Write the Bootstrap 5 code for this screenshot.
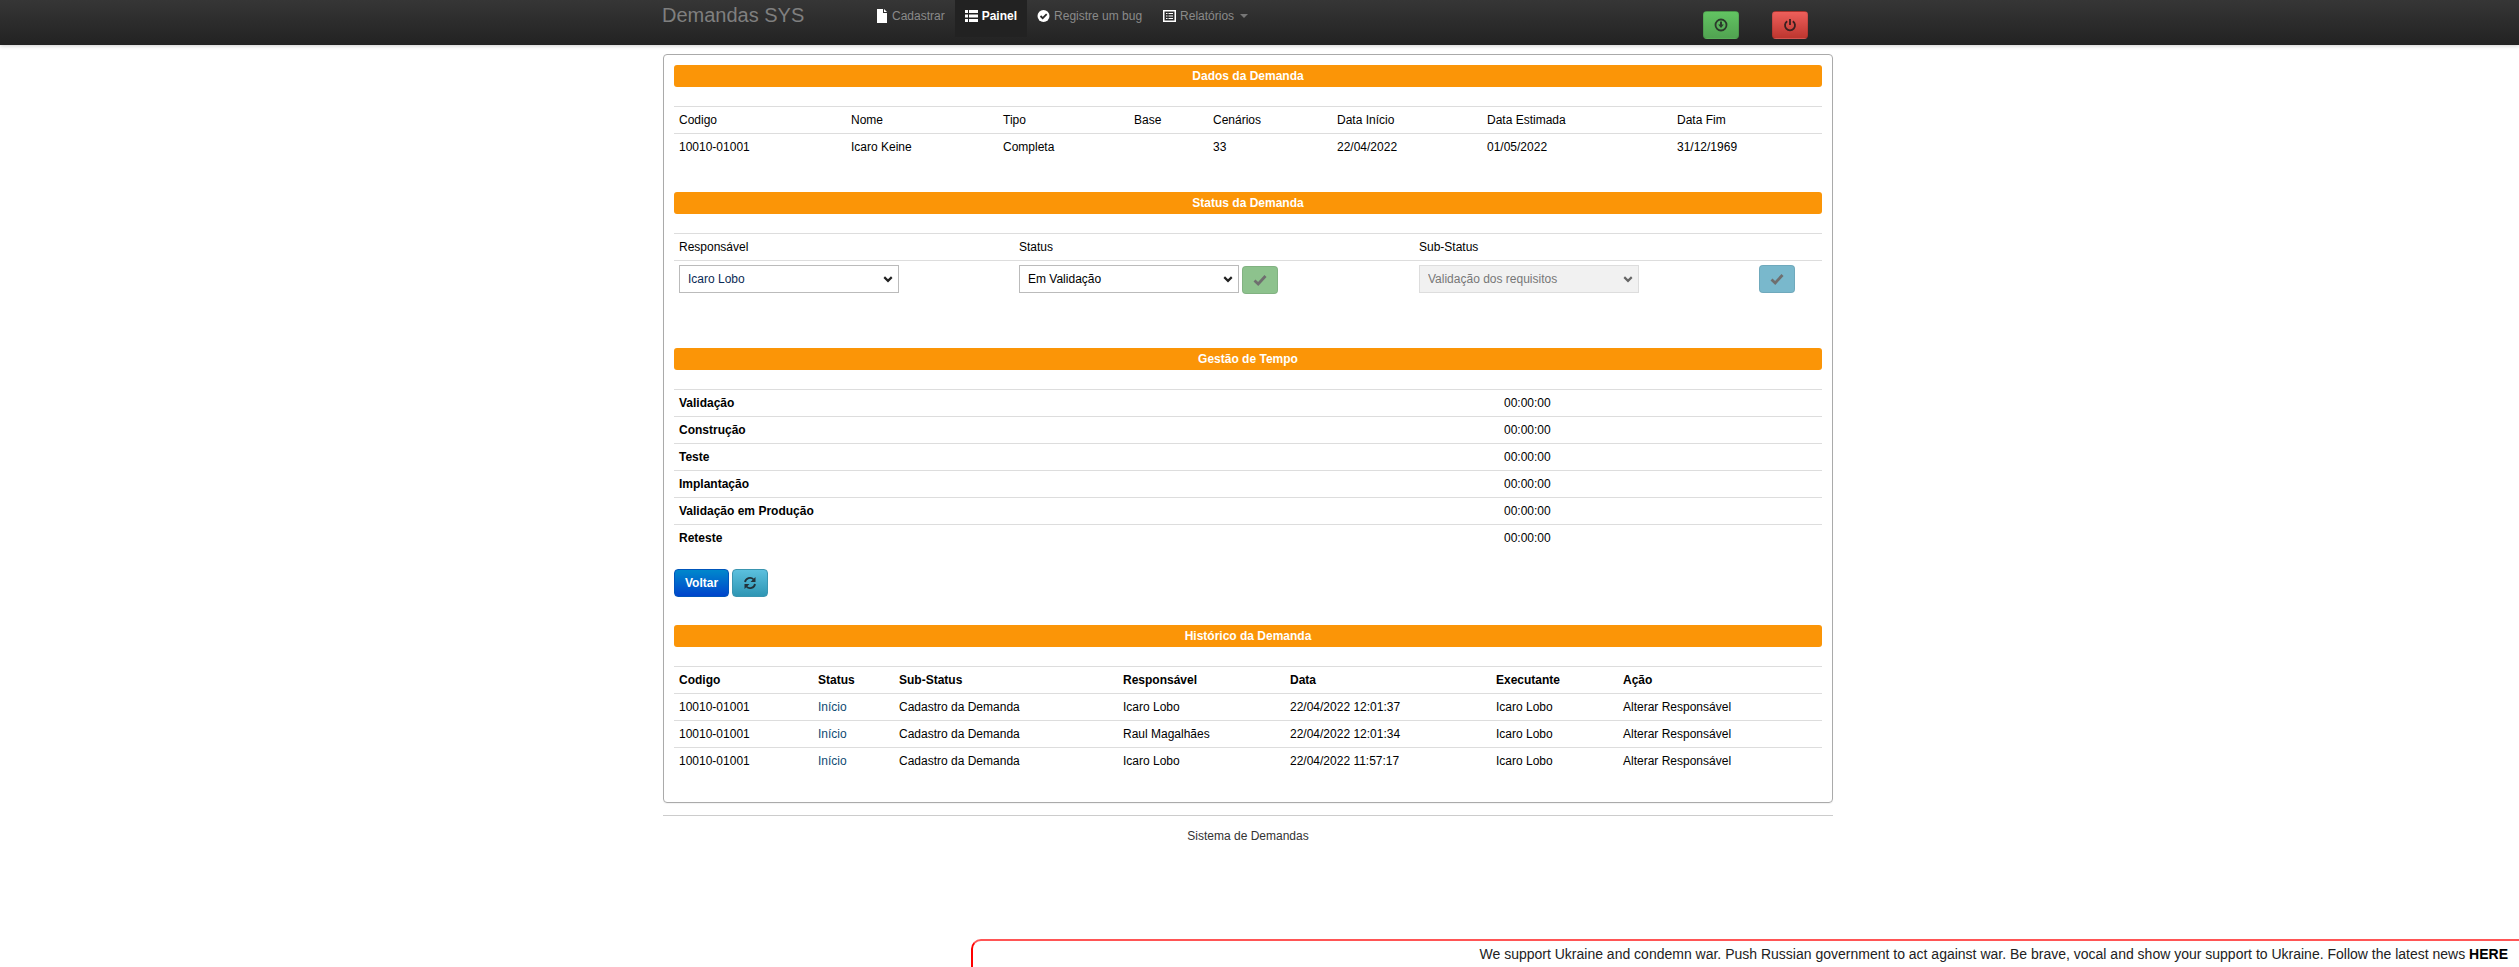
<!DOCTYPE html>
<html lang="pt-BR">
<head>
<meta charset="utf-8">
<title>Demandas SYS</title>
<link href="https://cdn.jsdelivr.net/npm/bootstrap@5.3.0/dist/css/bootstrap.min.css" rel="stylesheet">
<style>
html,body{height:100%}
body{font-family:"Liberation Sans",Arial,sans-serif;font-size:12px;line-height:18px;color:#333;background:#fff;overflow:hidden}
.topbar{height:45px;padding:0;background:linear-gradient(#363636,#222);box-shadow:0 1px 4px rgba(0,0,0,.2);align-items:flex-start;flex-wrap:nowrap;justify-content:flex-start}
.top-inner{width:1170px;margin-left:663px;display:flex;align-items:flex-start}
.brand{font-size:20px;line-height:30px;color:#7f7f7f;padding:0;margin:0 0 0 -1px;width:204px;flex:none;text-decoration:none}
.brand:hover{color:#7f7f7f}
.topnav{flex-direction:row;flex-wrap:nowrap;margin-right:0}
.topnav .nav-link{font-size:12px;line-height:18px;color:#8a8a8a;padding:7px 10px 12px;height:37px;display:flex;align-items:flex-start;gap:4px;white-space:nowrap}
.topnav .nav-link svg{margin-top:2px;flex:none}
.topnav .nav-link.on{background:#222;color:#fff;font-weight:bold}
.topnav .last-item{margin-left:1px}
.drop-tip{display:inline-block;width:0;height:0;border-top:4px solid #777;border-left:4px solid transparent;border-right:4px solid transparent;margin:7px 0 0 2px}
.top-btns{display:flex;gap:33px;margin:11px 0 0 445px}
.top-btn{width:36px;height:28px;padding:0;border:1px solid rgba(0,0,0,.1);border-radius:4px;display:flex;align-items:center;justify-content:center}
.top-btn.ok{background:linear-gradient(#62c462,#51a351)}
.top-btn.stop{background:linear-gradient(#ee5f5b,#bd362f)}
.page{width:1170px;margin-left:663px;padding-top:9px}
.box{border:1px solid #aaa;border-radius:4px;padding:10px 10px 0;height:749px;box-shadow:0 1px 1px rgba(0,0,0,.05)}
.strip{height:22px;line-height:22px;background:#fb9507;color:#fff;font-weight:bold;text-align:center;border-radius:3px;margin-bottom:19px}
.grid{table-layout:fixed;width:100%;margin:0;color:#000;--bs-table-color:#000;--bs-table-bg:transparent}
.grid th,.grid td{border-bottom:0;border-top:1px solid #ddd;padding:4px 5px;line-height:18px;height:27px;font-size:12px;vertical-align:top;background:transparent;box-shadow:none}
.grid th{font-weight:normal}
.grid.heavy th,.grid td.lead-cell{font-weight:bold}
.grid td.link-cell{color:#0e4a72}
.gap-a{margin-bottom:31px}
.gap-b{margin-bottom:50px}
.c1{width:172px}.c2{width:152px}.c3{width:131px}.c4{width:79px}.c5{width:124px}.c6{width:150px}.c7{width:190px}.c8{width:150px}
.s1{width:340px}.s2{width:400px}.s3{width:340px}.s4{width:68px}
.t1{width:825px}.t2{width:323px}
.h1c{width:139px}.h2c{width:81px}.h3c{width:224px}.h4c{width:167px}.h5c{width:206px}.h6c{width:127px}.h7c{width:204px}
.pick{display:inline-block;width:220px;height:28px;font-size:12px;line-height:18px;padding:4px 24px 4px 8px;border:1px solid #bbb;border-radius:0;color:#000;background-image:url("data:image/svg+xml,%3csvg xmlns='http://www.w3.org/2000/svg' viewBox='0 0 16 16'%3e%3cpath fill='none' stroke='%23222' stroke-width='3.4' d='M2 5l6 6 6-6'/%3e%3c/svg%3e");background-position:right 5px center;background-size:10px 10px;vertical-align:top}
.pick.blue-text{color:#0b2a55}
.pick:disabled{background-color:#f1f1f1;border-color:#ddd;color:#777;background-image:url("data:image/svg+xml,%3csvg xmlns='http://www.w3.org/2000/svg' viewBox='0 0 16 16'%3e%3cpath fill='none' stroke='%23666' stroke-width='3.4' d='M2 5l6 6 6-6'/%3e%3c/svg%3e")}
.act{width:36px;height:28px;padding:0;border:1px solid rgba(0,0,0,.08);border-radius:4px;display:inline-flex;align-items:center;justify-content:center;vertical-align:top}
.act.green{background:#8dc28d;margin:1px 0 0 3px}
.act.cyan{background:#79b8cc;margin-left:0}
.back-row{display:flex;gap:3px;margin:18px 0 28px}
.go{width:55px;height:28px;padding:0;color:#fff;font-size:12px;font-weight:bold;background:linear-gradient(#0088cc,#0044cc);border:1px solid #0055bb;border-radius:4px}
.spin{width:36px;height:28px;padding:0;background:linear-gradient(#5bc0de,#2f96b4);border:1px solid #3a95b0;border-radius:4px;display:flex;align-items:center;justify-content:center}
.rule{border:0;border-top:1px solid #ccc;margin:12px 0 11px;opacity:1}
.foot{text-align:center;color:#333;line-height:18px}
.war{position:fixed;left:971px;right:0;bottom:0;height:28px;background:#fff;border:2px solid #f00;border-top-color:#f55;border-right:0;border-bottom:0;border-top-left-radius:10px;text-align:right;color:#222;font-size:14px;line-height:27px;padding-right:11px;white-space:nowrap}
.war b{color:#000}
</style>
</head>
<body>
<nav class="navbar topbar">
  <div class="top-inner">
    <a class="brand" href="#">Demandas SYS</a>
    <ul class="navbar-nav topnav">
      <li class="nav-item"><a class="nav-link" href="#"><svg width="12" height="14" viewBox="0 0 12 14"><path fill="#fff" d="M1 0h6v4h4v10H1z"/><path fill="#fff" d="M8 0l3 3H8z"/></svg>Cadastrar</a></li>
      <li class="nav-item"><a class="nav-link on" href="#"><svg width="13" height="14" viewBox="0 0 13 14"><path fill="#fff" d="M0 1h3v3H0zM4 1h9v3H4zM0 5.500h3v3H0zM4 5.500h9v3H4zM0 10h3v3H0zM4 10h9v3H4z"/></svg>Painel</a></li>
      <li class="nav-item"><a class="nav-link" href="#"><svg width="13" height="14" viewBox="0 0 13 14"><circle cx="6.500" cy="7" r="6" fill="#fff"/><path d="M3.500 7l2.200 2.200 4-4" fill="none" stroke="#2a2a2a" stroke-width="1.800"/></svg>Registre um bug</a></li>
      <li class="nav-item last-item"><a class="nav-link" href="#"><svg width="13" height="14" viewBox="0 0 13 14"><path fill="#fff" d="M0 1h13v12H0z"/><path fill="#2a2a2a" d="M1.500 2.500h10v9h-10z"/><path fill="#fff" d="M3 4h1.500v1H3zM5.500 4H10v1H5.500zM3 6.500h1.500v1H3zM5.500 6.500H10v1H5.500zM3 9h1.500v1H3zM5.500 9H10v1H5.500z"/></svg>Relatórios<span class="drop-tip"></span></a></li>
    </ul>
    <div class="top-btns">
      <button class="top-btn ok" type="button" aria-label="Baixar"><svg width="14" height="14" viewBox="0 0 14 14"><circle cx="7" cy="7" r="5.500" fill="none" stroke="#2b3a2b" stroke-width="1.800"/><path fill="#2b3a2b" d="M6 3.500h2v3h1.800L7 10 4.200 6.500H6z"/></svg></button>
      <button class="top-btn stop" type="button" aria-label="Sair"><svg width="14" height="14" viewBox="0 0 14 14"><path d="M4.200 3.200a5 5 0 1 0 5.600 0" fill="none" stroke="#3a2020" stroke-width="1.800"/><path d="M7 1v6" stroke="#3a2020" stroke-width="1.800"/></svg></button>
    </div>
  </div>
</nav>
<main class="page">
  <div class="box">
    <div class="strip">Dados da Demanda</div>
    <table class="table grid gap-a">
      <colgroup><col class="c1"><col class="c2"><col class="c3"><col class="c4"><col class="c5"><col class="c6"><col class="c7"><col class="c8"></colgroup>
      <thead><tr><th>Codigo</th><th>Nome</th><th>Tipo</th><th>Base</th><th>Cenários</th><th>Data Início</th><th>Data Estimada</th><th>Data Fim</th></tr></thead>
      <tbody><tr><td>10010-01001</td><td>Icaro Keine</td><td>Completa</td><td></td><td>33</td><td>22/04/2022</td><td>01/05/2022</td><td>31/12/1969</td></tr></tbody>
    </table>
    <div class="strip">Status da Demanda</div>
    <table class="table grid gap-b">
      <colgroup><col class="s1"><col class="s2"><col class="s3"><col class="s4"></colgroup>
      <thead><tr><th>Responsável</th><th>Status</th><th>Sub-Status</th><th></th></tr></thead>
      <tbody><tr>
        <td><select class="form-select pick blue-text"><option>Icaro Lobo</option></select></td>
        <td><select class="form-select pick"><option>Em Validação</option></select><button class="act green" type="button" aria-label="Confirmar"><svg width="14" height="12" viewBox="0 0 14 12"><path d="M1.500 6.500l3.700 3.500L12.500 2" fill="none" stroke="#6f6f6f" stroke-width="2.800"/></svg></button></td>
        <td><select class="form-select pick" disabled><option>Validação dos requisitos</option></select></td>
        <td><button class="act cyan" type="button" aria-label="Confirmar"><svg width="14" height="12" viewBox="0 0 14 12"><path d="M1.500 6.500l3.700 3.500L12.500 2" fill="none" stroke="#6f6f6f" stroke-width="2.800"/></svg></button></td>
      </tr></tbody>
    </table>
    <div class="strip">Gestão de Tempo</div>
    <table class="table grid">
      <colgroup><col class="t1"><col class="t2"></colgroup>
      <tbody>
        <tr><td class="lead-cell">Validação</td><td>00:00:00</td></tr>
        <tr><td class="lead-cell">Construção</td><td>00:00:00</td></tr>
        <tr><td class="lead-cell">Teste</td><td>00:00:00</td></tr>
        <tr><td class="lead-cell">Implantação</td><td>00:00:00</td></tr>
        <tr><td class="lead-cell">Validação em Produção</td><td>00:00:00</td></tr>
        <tr><td class="lead-cell">Reteste</td><td>00:00:00</td></tr>
      </tbody>
    </table>
    <div class="back-row">
      <button class="go" type="button">Voltar</button>
      <button class="spin" type="button" aria-label="Atualizar"><svg width="14" height="14" viewBox="0 0 14 14"><path d="M2 6a5 5 0 0 1 8.600-2.500" fill="none" stroke="#22323a" stroke-width="1.800"/><path fill="#22323a" d="M12.500 1v5h-5z"/><path d="M12 8a5 5 0 0 1-8.600 2.500" fill="none" stroke="#22323a" stroke-width="1.800"/><path fill="#22323a" d="M1.500 13V8h5z"/></svg></button>
    </div>
    <div class="strip">Histórico da Demanda</div>
    <table class="table grid heavy">
      <colgroup><col class="h1c"><col class="h2c"><col class="h3c"><col class="h4c"><col class="h5c"><col class="h6c"><col class="h7c"></colgroup>
      <thead><tr><th>Codigo</th><th>Status</th><th>Sub-Status</th><th>Responsável</th><th>Data</th><th>Executante</th><th>Ação</th></tr></thead>
      <tbody>
        <tr><td>10010-01001</td><td class="link-cell">Início</td><td>Cadastro da Demanda</td><td>Icaro Lobo</td><td>22/04/2022 12:01:37</td><td>Icaro Lobo</td><td>Alterar Responsável</td></tr>
        <tr><td>10010-01001</td><td class="link-cell">Início</td><td>Cadastro da Demanda</td><td>Raul Magalhães</td><td>22/04/2022 12:01:34</td><td>Icaro Lobo</td><td>Alterar Responsável</td></tr>
        <tr><td>10010-01001</td><td class="link-cell">Início</td><td>Cadastro da Demanda</td><td>Icaro Lobo</td><td>22/04/2022 11:57:17</td><td>Icaro Lobo</td><td>Alterar Responsável</td></tr>
      </tbody>
    </table>
  </div>
  <hr class="rule">
  <div class="foot">Sistema de Demandas</div>
</main>
<div class="war">We support Ukraine and condemn war. Push Russian government to act against war. Be brave, vocal and show your support to Ukraine. Follow the latest news <b>HERE</b></div>
<script src="https://cdn.jsdelivr.net/npm/bootstrap@5.3.0/dist/js/bootstrap.bundle.min.js"></script>
</body>
</html>
